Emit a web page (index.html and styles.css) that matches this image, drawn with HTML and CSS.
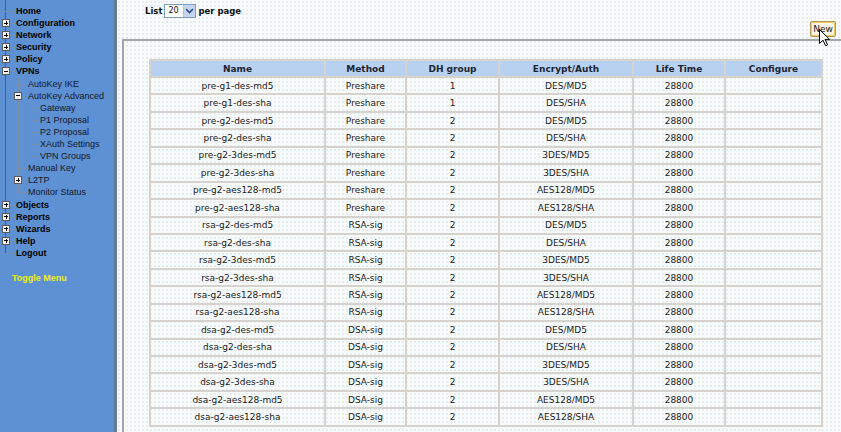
FILE: index.html
```html
<!DOCTYPE html>
<html lang="en">
<head>
  <meta charset="UTF-8" />
  <title>VPNs - AutoKey Advanced - P1 Proposal</title>
  <link rel="stylesheet" href="styles.css">
</head>
<body>

  <nav class="menu">
    <ul class="tree">
      <li><a>Home</a></li>
      <li><span class="tg plus"></span><a>Configuration</a></li>
      <li><span class="tg plus"></span><a>Network</a></li>
      <li><span class="tg plus"></span><a>Security</a></li>
      <li><span class="tg plus"></span><a>Policy</a></li>
      <li><span class="tg"></span><a>VPNs</a>
        <ul class="tree sub">
          <li><a>AutoKey IKE</a></li>
          <li><span class="tg"></span><a>AutoKey Advanced</a>
            <ul class="tree sub sub2">
              <li><a>Gateway</a></li>
              <li><a>P1 Proposal</a></li>
              <li><a>P2 Proposal</a></li>
              <li><a>XAuth Settings</a></li>
              <li><a>VPN Groups</a></li>
            </ul>
          </li>
          <li><a>Manual Key</a></li>
          <li><span class="tg plus"></span><a>L2TP</a></li>
          <li><a>Monitor Status</a></li>
        </ul>
      </li>
      <li><span class="tg plus"></span><a>Objects</a></li>
      <li><span class="tg plus"></span><a>Reports</a></li>
      <li><span class="tg plus"></span><a>Wizards</a></li>
      <li><span class="tg plus"></span><a>Help</a></li>
      <li><a>Logout</a></li>
    </ul>
    <div class="toggle">Toggle Menu</div>
  </nav>

  <main class="content">
    <div class="toolbar">
      List
      <span class="select">
        <span class="select__value">20</span>
        <span class="select__btn">
          <svg width="9" height="6" viewBox="0 0 9 6"><path d="M1 1 L4.5 4.5 L8 1" fill="none" stroke="#2a4d8c" stroke-width="1.6"/></svg>
        </span>
      </span>
      per page
    </div>

    <div class="actions">
      <button class="button">New
        <svg class="cursor" width="12" height="18" viewBox="0 0 12 18"><path d="M0.5 0.5 L0.5 14.5 L4 11.2 L6.6 16.8 L8.6 15.9 L6 10.4 L10.6 10.4 Z" fill="#fff" stroke="#000" stroke-width="1"/></svg>
      </button>
    </div>

    <div class="panel">
      <table class="list">
        <colgroup>
          <col style="width:175px"><col style="width:81px"><col style="width:93px"><col style="width:134px"><col style="width:92px"><col style="width:97px">
        </colgroup>
        <thead>
          <tr><th>Name</th><th>Method</th><th>DH group</th><th>Encrypt/Auth</th><th>Life Time</th><th>Configure</th></tr>
        </thead>
        <tbody id="rows"></tbody>
      </table>
    </div>
  </main>

  <script>
    const proposals = [
      ['pre-g1-des-md5', 'Preshare', 1, 'DES/MD5'],
      ['pre-g1-des-sha', 'Preshare', 1, 'DES/SHA'],
      ['pre-g2-des-md5', 'Preshare', 2, 'DES/MD5'],
      ['pre-g2-des-sha', 'Preshare', 2, 'DES/SHA'],
      ['pre-g2-3des-md5', 'Preshare', 2, '3DES/MD5'],
      ['pre-g2-3des-sha', 'Preshare', 2, '3DES/SHA'],
      ['pre-g2-aes128-md5', 'Preshare', 2, 'AES128/MD5'],
      ['pre-g2-aes128-sha', 'Preshare', 2, 'AES128/SHA'],
      ['rsa-g2-des-md5', 'RSA-sig', 2, 'DES/MD5'],
      ['rsa-g2-des-sha', 'RSA-sig', 2, 'DES/SHA'],
      ['rsa-g2-3des-md5', 'RSA-sig', 2, '3DES/MD5'],
      ['rsa-g2-3des-sha', 'RSA-sig', 2, '3DES/SHA'],
      ['rsa-g2-aes128-md5', 'RSA-sig', 2, 'AES128/MD5'],
      ['rsa-g2-aes128-sha', 'RSA-sig', 2, 'AES128/SHA'],
      ['dsa-g2-des-md5', 'DSA-sig', 2, 'DES/MD5'],
      ['dsa-g2-des-sha', 'DSA-sig', 2, 'DES/SHA'],
      ['dsa-g2-3des-md5', 'DSA-sig', 2, '3DES/MD5'],
      ['dsa-g2-3des-sha', 'DSA-sig', 2, '3DES/SHA'],
      ['dsa-g2-aes128-md5', 'DSA-sig', 2, 'AES128/MD5'],
      ['dsa-g2-aes128-sha', 'DSA-sig', 2, 'AES128/SHA']
    ];

    const tbody = document.getElementById('rows');
    tbody.innerHTML = proposals.map((p) =>
      `<tr><td>${p[0]}</td><td>${p[1]}</td><td>${p[2]}</td><td>${p[3]}</td><td>28800</td><td></td></tr>`
    ).join('');
  </script>
</body>
</html>
```

FILE: styles.css
```css
* {
  margin: 0;
  padding: 0;
  box-sizing: border-box;
}

html, body {
  height: 432px;
  overflow: hidden;
}

body {
  display: flex;
  font-family: "DejaVu Sans", Verdana, sans-serif;
  font-size: 9px;
  color: #222;
  background-color: #f9fbfb;
}

/* left menu */

.menu {
  width: 117px;
  flex-shrink: 0;
  background-color: #5e91d3;
  border-right: 3px solid #687b92;
  padding-top: 5px;
  font-family: "Liberation Sans", Arial, sans-serif;
  font-size: 9px;
}

.tree {
  list-style: none;
  position: relative;
}

.tree::before {
  content: "";
  position: absolute;
  left: 5px;
  top: -5px;
  bottom: 6px;
  border-left: 1px solid #4c5d74;
}

.tree li {
  position: relative;
  padding-left: 16px;
  line-height: 12.1px;
}

.tree li::before {
  content: "";
  position: absolute;
  left: 5px;
  top: 6px;
  width: 10px;
  border-top: 1px solid #7c8ea6;
}

.tree a {
  font-weight: bold;
  color: #000;
}

.tree.sub::before {
  top: 0;
  left: 2px;
  border-left-color: #7c8ea6;
}

.tree.sub li {
  padding-left: 12px;
}

.tree.sub li::before {
  left: 2px;
  width: 8px;
}

.tree.sub a {
  font-weight: normal;
  color: #14182a;
}

.tree.sub2::before,
.tree.sub2 li::before {
  left: 3px;
}

.tree.sub2 li::before {
  width: 7px;
}

.tg {
  position: absolute;
  left: 2px;
  top: 2px;
  width: 8px;
  height: 8px;
  border: 1px solid #5a5a5a;
  background-color: #f2f2f2;
  z-index: 1;
}

.tree.sub .tg {
  left: -2px;
}

.tg::before {
  content: "";
  position: absolute;
  left: 1px;
  top: 2.5px;
  width: 4px;
  height: 1px;
  background-color: #000;
}

.tg.plus::after {
  content: "";
  position: absolute;
  left: 2.5px;
  top: 1px;
  width: 1px;
  height: 4px;
  background-color: #000;
}

.toggle {
  margin-top: 13px;
  padding-left: 12px;
  line-height: 12px;
  font-weight: bold;
  color: #f0f010;
}

/* content */

.content {
  flex: 1;
  padding-top: 4px;
  background-color: #f9fbfb;
  background-image: radial-gradient(#dbe6ee 0.6px, transparent 0.9px);
  background-size: 4px 4px;
}

.toolbar {
  display: flex;
  align-items: center;
  gap: 2px;
  height: 14px;
  padding-left: 28px;
  font-size: 8.5px;
  font-weight: bold;
  color: #111;
}

.select {
  display: flex;
  width: 32px;
  height: 14px;
  border: 1px solid #7f9db9;
  background-color: #fff;
  font-weight: normal;
}

.select__value {
  flex: 1;
  padding-left: 3px;
  line-height: 12px;
  font-size: 8px;
}

.select__btn {
  width: 12px;
  display: flex;
  align-items: center;
  justify-content: center;
  background-color: #c6d6f2;
  border-left: 1px solid #b0c4e4;
}

.actions {
  display: flex;
  justify-content: flex-end;
  padding: 3px 7px 0 0;
}

.button {
  position: relative;
  width: 26px;
  height: 16px;
  font-family: "DejaVu Sans", Verdana, sans-serif;
  font-size: 9px;
  color: #222;
  background-color: #f7f4e6;
  border: 1px solid #b39a55;
  border-radius: 2px;
  box-shadow: inset 0 0 0 1px #f0c860;
}

.cursor {
  position: absolute;
  left: 8px;
  top: 7px;
}

.panel {
  margin: 2px 0 0 5px;
  padding: 18px 20px 0 25px;
  border-top: 2px solid #a6a6a6;
  border-left: 2px solid #a6a6a6;
  height: 400px;
}

.list {
  width: 672px;
  table-layout: fixed;
  border-collapse: separate;
  border-spacing: 0;
  border-top: 2px solid #d6d3ce;
  border-left: 2px solid #d6d3ce;
}

.list th,
.list td {
  border-right: 2px solid #d6d3ce;
  border-bottom: 2px solid #d6d3ce;
  text-align: center;
  white-space: nowrap;
  padding: 0;
}

.list thead tr {
  height: 17px;
}

.list th {
  background-color: #b9d1f1;
  font-weight: bold;
  color: #1c2433;
}

.list tbody tr {
  height: 17.45px;
}
```
